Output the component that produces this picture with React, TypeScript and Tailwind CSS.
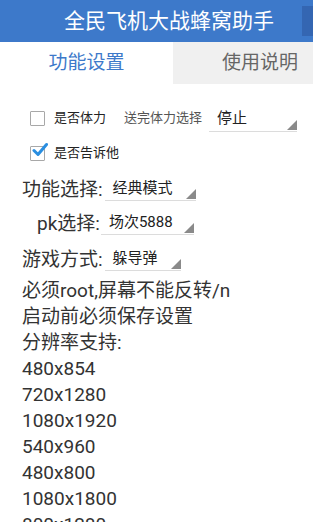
import React from 'react';

const font = { fontFamily: 'Roboto, "Noto Sans CJK SC", sans-serif' };

function Corner() {
  return (
    <svg className="w-[10px] h-[10px] flex-shrink-0" viewBox="0 0 10 10">
      <polygon points="10,0 10,10 0,10" fill="#8a8a8a" />
    </svg>
  );
}

function Spinner({ label, width, textClass }: { label: string; width: string; textClass: string }) {
  return (
    <div className={`flex items-end justify-between border-b border-[#dcdcdc] pb-[1px] ${width}`}>
      <span className={`pl-[8px] text-[#222] ${textClass}`}>{label}</span>
      <Corner />
    </div>
  );
}

function Checkbox({ checked }: { checked?: boolean }) {
  return (
    <span className="relative inline-flex w-[15px] h-[15px] border border-[#a8a8a8] bg-white rounded-[1px] flex-shrink-0">
      {checked && (
        <svg className="absolute -top-[5px] left-[1px] w-[16px] h-[16px]" viewBox="0 0 16 16">
          <path d="M2 8.5 L6 12.5 L14.5 2.5" fill="none" stroke="#2a8ee0" strokeWidth={3} strokeLinecap="round" strokeLinejoin="round" />
        </svg>
      )}
    </span>
  );
}

export default function App() {
  const lines = [
    '必须root,屏幕不能反转/n',
    '启动前必须保存设置',
    '分辨率支持:',
    '480x854',
    '720x1280',
    '1080x1920',
    '540x960',
    '480x800',
    '1080x1800',
    '800x1280',
  ];

  return (
    <div className="w-[313px] h-[522px] overflow-hidden bg-white" style={font}>
      {/* 标题栏 */}
      <div className="h-[42px] bg-[#3d79ca] flex items-center">
        <div className="flex-1 text-center pl-[36px] text-white text-[21px] leading-none">全民飞机大战蜂窝助手</div>
        <div className="w-[11px] h-[30px] bg-[#3466b2] self-center" />
      </div>

      {/* 标签页 */}
      <div className="flex h-[42px]">
        <div className="w-[173px] flex items-center justify-center text-[19px] text-[#3d79ca]">功能设置</div>
        <div className="flex-1 bg-[#f0f0f0] flex items-center justify-center pl-[34px] text-[19px] text-[#666]">使用说明</div>
      </div>

      <div className="pt-[22px]">
        <div className="flex items-center h-[24px] pl-[30px]">
          <Checkbox />
          <span className="ml-[9px] text-[13px] text-[#222]">是否体力</span>
          <span className="ml-[18px] text-[13px] text-[#555]">送完体力选择</span>
          <div className="ml-[7px] mt-[3px]">
            <Spinner label="停止" width="w-[88px]" textClass="text-[15px]" />
          </div>
        </div>

        <div className="flex items-center h-[24px] pl-[30px] mt-[11px]">
          <Checkbox checked />
          <span className="ml-[9px] text-[13px] text-[#222]">是否告诉他</span>
        </div>

        <div className="flex items-end pl-[22px] mt-[10px] h-[28px]">
          <span className="text-[19px] text-[#333] leading-[26px]">功能选择:</span>
          <div className="ml-[2px] mb-[2px]">
            <Spinner label="经典模式" width="w-[91px]" textClass="text-[15px]" />
          </div>
        </div>

        <div className="flex items-end pl-[37px] mt-[6px] h-[28px]">
          <span className="text-[19px] text-[#333] leading-[26px]">pk选择:</span>
          <div className="ml-[1px] mb-[2px]">
            <Spinner label="场次5888" width="w-[93px]" textClass="text-[15px]" />
          </div>
        </div>

        <div className="flex items-end pl-[22px] mt-[8px] h-[28px]">
          <span className="text-[19px] text-[#333] leading-[26px]">游戏方式:</span>
          <div className="ml-[2px] mb-[2px]">
            <Spinner label="躲导弹" width="w-[76px]" textClass="text-[15px]" />
          </div>
        </div>

        <div className="pl-[22px] mt-[5px]">
          {lines.map((l) => (
            <div key={l} className="text-[19px] leading-[26px] text-[#333] whitespace-nowrap">{l}</div>
          ))}
        </div>
      </div>
    </div>
  );
}
